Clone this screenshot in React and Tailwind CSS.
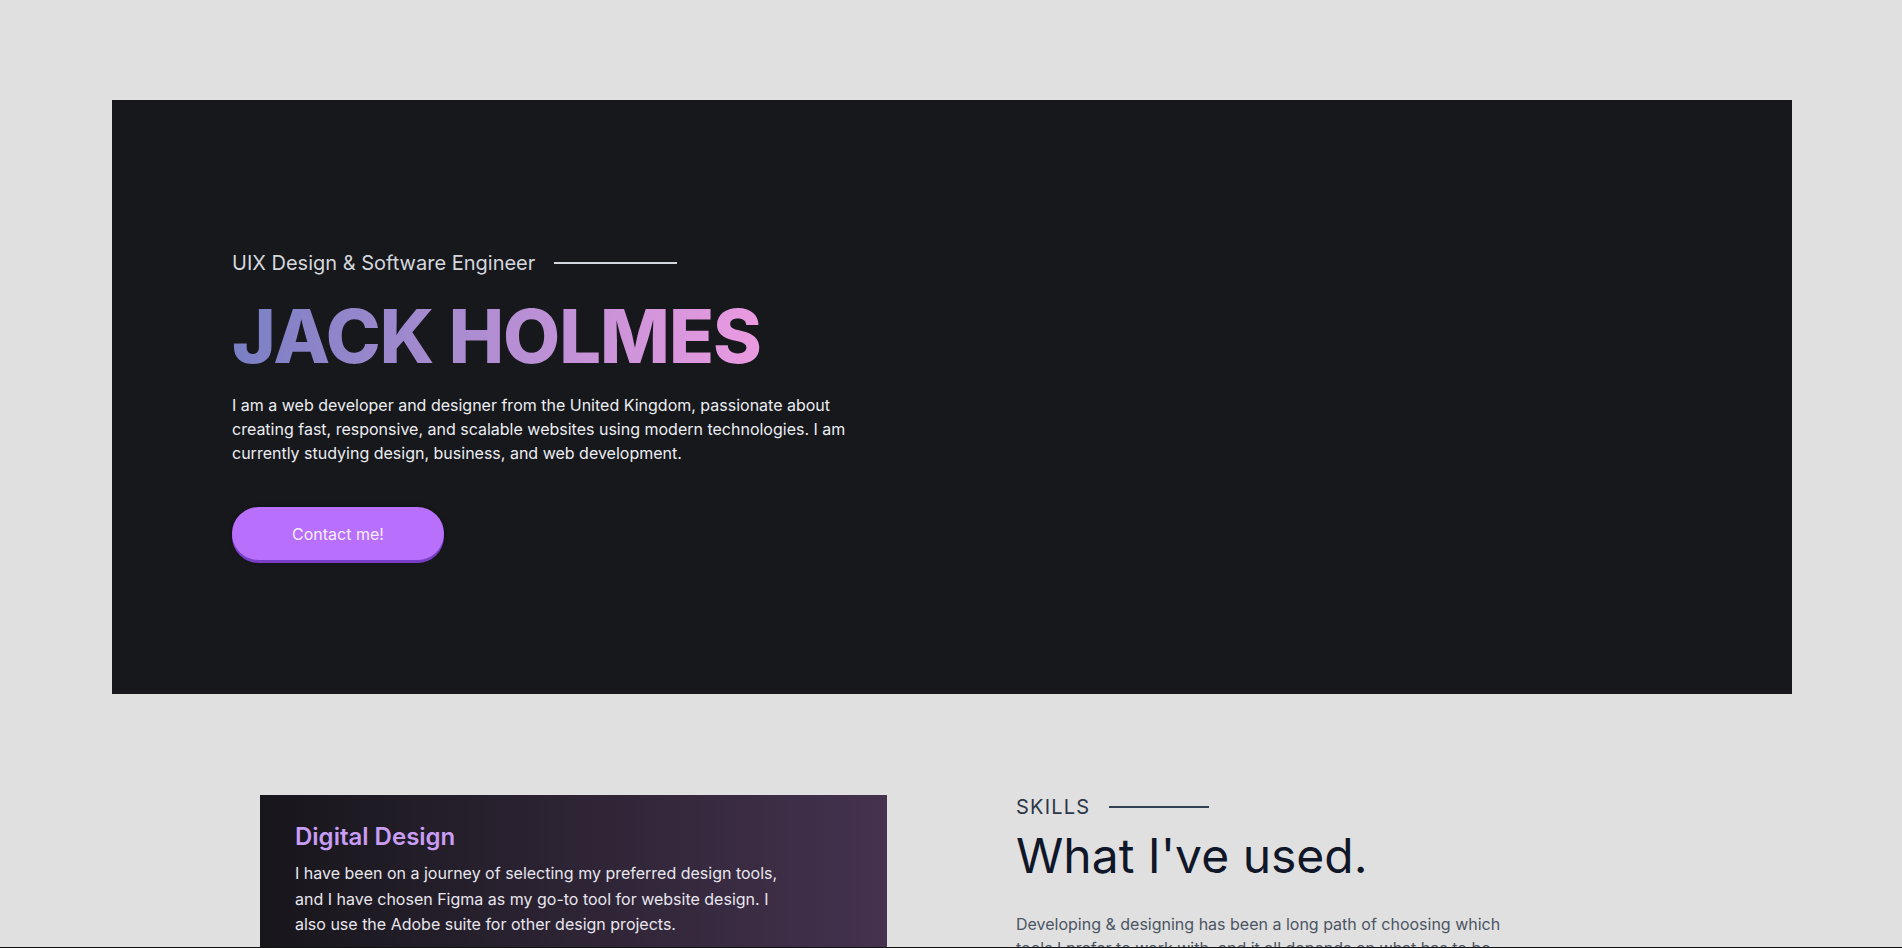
import React from 'react';

const Hero = () => (
    <section className="ml-[112px] w-[1680px] h-[594px] bg-[#17181c] pl-[120px] pt-[149px]">
        <div className="flex items-center gap-[19px]">
            <span className="text-xl leading-7 text-[#d4d7dd]">UIX Design &amp; Software Engineer</span>
            <span className="block w-[123px] h-[2px] bg-[#d4d7dd]" />
        </div>
        <h1 className="mt-[22px] text-[74px] leading-none font-extrabold tracking-[-1px] bg-gradient-to-r from-[#797fc4] to-[#eb9ae1] bg-clip-text text-transparent w-fit">
            JACK HOLMES
        </h1>
        <p className="mt-[20px] w-[640px] text-base leading-6 text-[#eceef2]">
            I am a web developer and designer from the United Kingdom, passionate about creating fast, responsive, and scalable websites using modern technologies. I am currently studying design, business, and web development.
        </p>
        <button
            type="button"
            className="mt-[42px] w-[212px] h-[53px] rounded-full bg-[#b86ffc] text-base text-[#f5eeff] shadow-[0_3px_0_#7a3fc6,0_0_4px_rgba(0,0,0,0.4)]"
        >
            Contact me!
        </button>
    </section>
);

const Skills = () => (
    <section className="flex items-start pl-[260px] mt-[101px]">
        <div className="w-[627px] h-[400px] bg-gradient-to-r from-[#17161b] to-[#45324f] pl-[35px] pt-[26px]">
            <h3 className="text-2xl leading-8 font-semibold text-[#c89df3]">Digital Design</h3>
            <p className="mt-[8px] max-w-[492px] text-base leading-[1.6] text-[#e8e6ee]">
                I have been on a journey of selecting my preferred design tools, and I have chosen Figma as my go-to tool for website design. I also use the Adobe suite for other design projects.
            </p>
        </div>
        <div className="ml-[129px] -mt-[2px]">
            <div className="flex items-center gap-[19px]">
                <span className="text-xl leading-7 tracking-[0.06em] text-[#2d3748]">SKILLS</span>
                <span className="block w-[100px] h-[2px] bg-[#334155]" />
            </div>
            <h2 className="mt-[6px] text-5xl leading-[1.2] text-[#0f1729]">What I've used.</h2>
            <p className="mt-[27px] w-[500px] text-base leading-6 text-[#4b5563]">
                Developing &amp; designing has been a long path of choosing which tools I prefer to work with, and it all depends on what has to be done for each project.
            </p>
        </div>
    </section>
);

const App = () => (
    <div className="min-h-screen bg-[#e0e0e0] pt-[100px] pb-40 font-['Inter',sans-serif] overflow-hidden">
        <Hero />
        <Skills />
        <div className="fixed bottom-0 left-0 right-0 h-px bg-[#111]" />
    </div>
);

export default App;
